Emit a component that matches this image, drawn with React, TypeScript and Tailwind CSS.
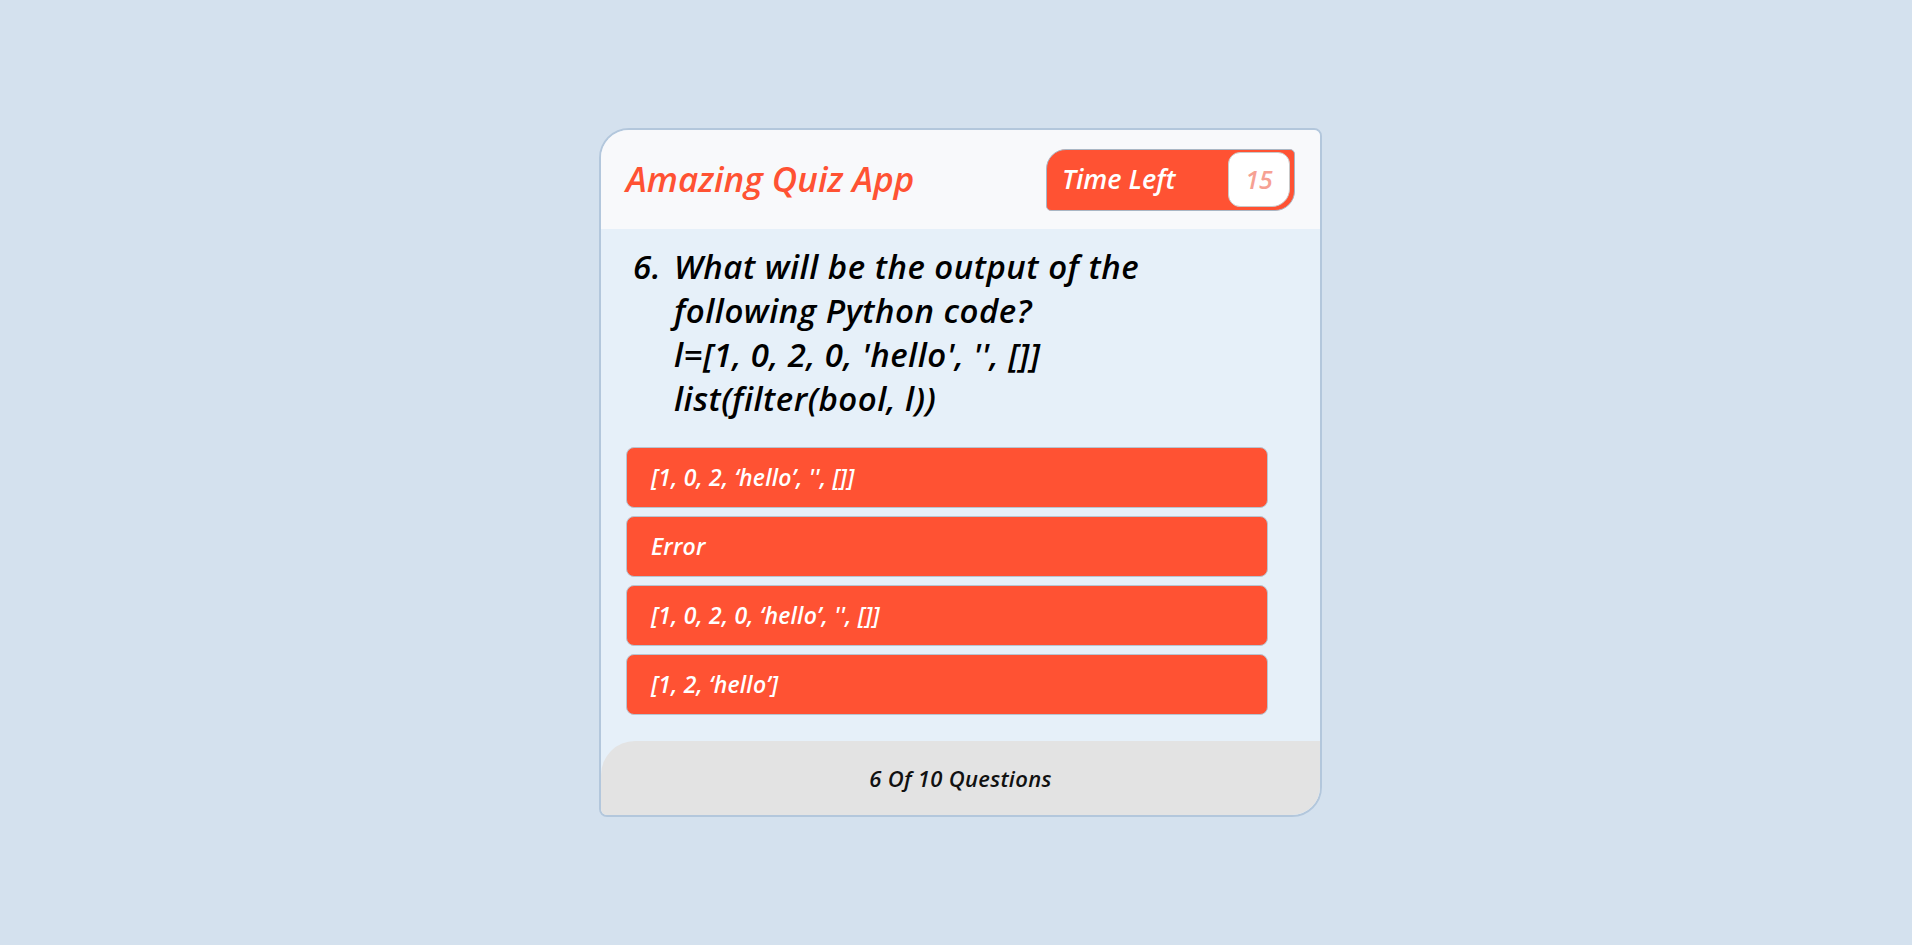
import React from 'react';

const options = [
    "[1, 0, 2, ‘hello’, '', []]",
    'Error',
    "[1, 0, 2, 0, ‘hello’, '', []]",
    "[1, 2, ‘hello’]",
];

const App: React.FC = () => {
    return (
        <div
            className="min-h-screen w-full bg-[#d4e1ee] flex items-center justify-center pl-[9px]"
            style={{ fontFamily: '"Open Sans", Lato, sans-serif' }}
        >
            <div className="w-[723px] h-[689px] flex flex-col overflow-hidden border-2 border-[#b3c7dc] rounded-tl-[30px] rounded-br-[30px] rounded-tr-[8px] rounded-bl-[8px] bg-[#e6f0f9] italic">

                {/* Header */}
                <div className="h-[99px] shrink-0 bg-[#f8f9fb] flex items-center justify-between pl-[25px] pr-[25px]">
                    <h1 className="text-[35px] font-semibold text-[#ff5233]">Amazing Quiz App</h1>
                    <div className="w-[249px] h-[62px] bg-[#ff5233] border border-[#a9b6c4] rounded-tl-[20px] rounded-br-[20px] rounded-tr-[5px] rounded-bl-[5px] flex items-center justify-between pl-[15px] pr-[4px]">
                        <span className="text-[27px] font-semibold text-white">Time Left</span>
                        <div className="w-[62px] h-[55px] bg-white border border-[#c9c9c9] rounded-[12px] rounded-br-[18px] flex items-center justify-center text-[25px] font-semibold text-[#f6a193]">
                            15
                        </div>
                    </div>
                </div>

                {/* Question */}
                <div className="flex-1 pt-[16px]">
                    <div className="flex pl-[32px] text-[33px] leading-[44px] font-semibold text-black tracking-[0.5px]">
                        <span className="w-[41px] shrink-0">6.</span>
                        <div>
                            <div>What will be the output of the</div>
                            <div>following Python code?</div>
                            <div>l=[1, 0, 2, 0, 'hello', '', []]</div>
                            <div>list(filter(bool, l))</div>
                        </div>
                    </div>

                    <div className="mt-[26px] ml-[25px] w-[642px] flex flex-col gap-[8px]">
                        {options.map((opt) => (
                            <button
                                key={opt}
                                className="h-[61px] w-full bg-[#ff5233] border border-[#b8c4d0] rounded-[8px] flex items-center pl-[24px] text-left text-[23px] font-semibold italic text-white tracking-[0.2px]"
                            >
                                {opt}
                            </button>
                        ))}
                    </div>
                </div>

                {/* Footer */}
                <div className="h-[74px] shrink-0 bg-[#e3e3e3] rounded-tl-[34px] flex items-center justify-center text-[22px] font-semibold text-[#111] tracking-[0.3px]">
                    6 Of 10 Questions
                </div>
            </div>
        </div>
    );
};

export default App;
